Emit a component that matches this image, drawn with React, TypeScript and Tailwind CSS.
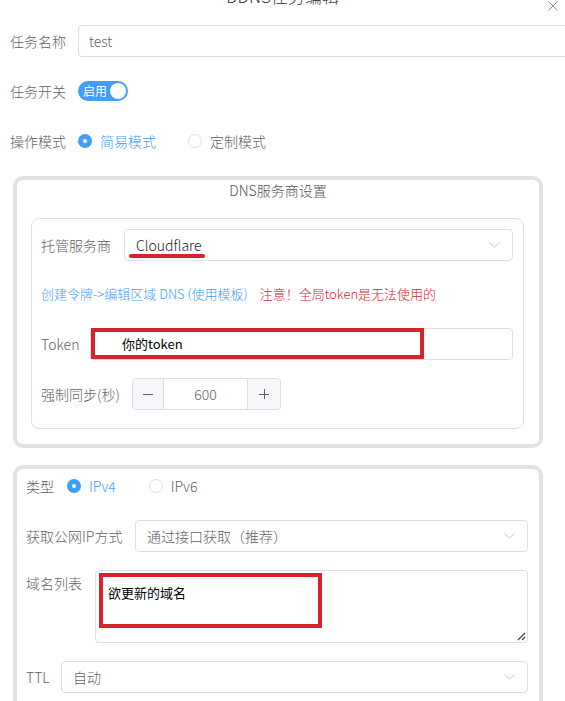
import React from 'react';

const Chevron = () => (
  <svg width="11" height="6" viewBox="0 0 11 6" className="shrink-0">
    <path d="M0.5 0.5 L5.5 5 L10.5 0.5" fill="none" stroke="#c0c4cc" strokeWidth="1" />
  </svg>
);

const Radio = ({ checked, label }: { checked?: boolean; label: string }) => (
  <span className="flex items-center">
    {checked ? (
      <span className="w-[14px] h-[14px] rounded-full bg-[#409eff] flex items-center justify-center">
        <span className="w-[4px] h-[4px] rounded-full bg-white" />
      </span>
    ) : (
      <span className="w-[14px] h-[14px] rounded-full border border-[#dcdfe6] bg-white" />
    )}
    <span className={`ml-[8px] text-[14px] ${checked ? 'text-[#409eff]' : 'text-[#606266]'}`}>{label}</span>
  </span>
);

export default function App() {
  return (
    <div className="relative w-[565px] h-[701px] overflow-hidden bg-white font-['Noto_Sans_CJK_SC','Noto_Sans',sans-serif] font-light text-[#606266]">
      {/* dialog header, scrolled up */}
      <div className="-mt-[15px] h-[22px] leading-[22px] text-center text-[17px] text-[#303133]">DDNS任务编辑</div>
      <svg width="10" height="10" viewBox="0 0 10 10" className="absolute top-[1px] right-[7px]">
        <path d="M0.5 0.5 L9.5 9.5 M9.5 0.5 L0.5 9.5" stroke="#909399" strokeWidth="1" />
      </svg>

      {/* basic rows */}
      <div className="mt-[18px] flex items-center h-[32px]">
        <span className="w-[78px] shrink-0 pl-[10px] text-[14px]">任务名称</span>
        <div className="w-[500px] shrink-0 h-[32px] border border-[#dcdfe6] rounded-[4px] flex items-center pl-[10px] text-[14px]">test</div>
      </div>

      <div className="mt-[18px] flex items-center h-[32px]">
        <span className="w-[78px] shrink-0 pl-[10px] text-[14px]">任务开关</span>
        <div className="w-[50px] h-[20px] rounded-full bg-[#409eff] flex items-center justify-between pl-[5px] pr-[2px]">
          <span className="text-[12px] leading-[12px] text-white font-normal">启用</span>
          <span className="w-[16px] h-[16px] rounded-full bg-white" />
        </div>
      </div>

      <div className="mt-[18px] flex items-center h-[32px]">
        <span className="w-[78px] shrink-0 pl-[10px] text-[14px]">操作模式</span>
        <Radio checked label="简易模式" />
        <span className="w-[32px]" />
        <Radio label="定制模式" />
      </div>

      {/* DNS provider box */}
      <div className="mt-[19px] ml-[13px] w-[530px] border-[4px] border-[#e2e2e2] rounded-[10px] pb-[15px]">
        <div className="h-[20px] leading-[20px] text-center text-[14px] text-[#555]">DNS服务商设置</div>
        <div className="mt-[18px] ml-[14px] w-[493px] border border-[#dfe1e6] rounded-[8px] pl-[9px] pr-[10px] pt-[10px] pb-[18px]">
          <div className="flex items-center h-[32px]">
            <span className="w-[83px] shrink-0 text-[14px]">托管服务商</span>
            <div className="relative flex-1 h-[32px] border border-[#dcdfe6] rounded-[4px] flex items-center justify-between pl-[11px] pr-[12px]">
              <span className="text-[14px] text-[#222]">Cloudflare</span>
              <Chevron />
              <span className="absolute left-[4px] top-[24px] w-[76px] h-[4px] rounded-full bg-[#d8232c]" />
            </div>
          </div>

          <div className="mt-[23px] h-[20px] leading-[20px] text-[13px] flex">
            <span className="text-[#409eff]">创建令牌-&gt;编辑区域 DNS (使用模板)</span>
            <span className="ml-[12px] text-[#d8232c]">注意！全局token是无法使用的</span>
          </div>

          <div className="mt-[24px] flex items-center h-[32px]">
            <span className="w-[49px] shrink-0 text-[14px]">Token</span>
            <div className="relative flex-1 h-[32px] border border-[#dcdfe6] rounded-[4px]">
              <div className="absolute left-0 -top-[1px] w-[333px] h-[31px] border-[4px] border-[#d8232c] flex items-center pl-[27px] text-[13px] text-black font-normal">
                你的token
              </div>
            </div>
          </div>

          <div className="mt-[18px] flex items-center h-[32px]">
            <span className="w-[91px] shrink-0 text-[14px]">强制同步(秒)</span>
            <div className="w-[149px] h-[32px] border border-[#dcdfe6] rounded-[4px] flex overflow-hidden">
              <div className="w-[31px] bg-[#f5f7fa] border-r border-[#dcdfe6] flex items-center justify-center">
                <span className="w-[10px] h-px bg-[#606266]" />
              </div>
              <div className="flex-1 flex items-center justify-center text-[14px]">600</div>
              <div className="w-[33px] bg-[#f5f7fa] border-l border-[#dcdfe6] flex items-center justify-center relative">
                <span className="w-[10px] h-px bg-[#606266]" />
                <span className="absolute w-px h-[10px] bg-[#606266]" />
              </div>
            </div>
          </div>
        </div>
      </div>

      {/* record box */}
      <div className="mt-[17px] ml-[13px] w-[530px] h-[300px] border-[4px] border-[#e2e2e2] rounded-[10px] pl-[9px] pr-[11px] pt-[7px]">
        <div className="flex items-center h-[20px]">
          <span className="w-[41px] shrink-0 text-[14px]">类型</span>
          <Radio checked label="IPv4" />
          <span className="w-[33px]" />
          <Radio label="IPv6" />
        </div>

        <div className="mt-[24px] flex items-center h-[32px]">
          <span className="w-[109px] shrink-0 text-[14px]">获取公网IP方式</span>
          <div className="flex-1 h-[32px] border border-[#dcdfe6] rounded-[4px] flex items-center justify-between pl-[11px] pr-[12px]">
            <span className="text-[14px]">通过接口获取（推荐）</span>
            <Chevron />
          </div>
        </div>

        <div className="mt-[18px] flex items-start">
          <span className="w-[69px] shrink-0 text-[14px] leading-[20px] pt-[3px]">域名列表</span>
          <div className="relative flex-1 h-[73px] border border-[#dcdfe6] rounded-[4px]">
            <div className="absolute left-[3px] top-[2px] w-[223px] h-[55px] border-[4px] border-[#d8232c] pl-[5px] pt-[6px] text-[13px] leading-[20px] text-black font-normal">
              欲更新的域名
            </div>
            <svg width="10" height="10" viewBox="0 0 10 10" className="absolute right-[1px] bottom-[1px]">
              <path d="M9 2 L2 9 M9 6 L6 9" stroke="#444" strokeWidth="1.2" />
            </svg>
          </div>
        </div>

        <div className="mt-[18px] flex items-center h-[32px]">
          <span className="w-[35px] shrink-0 text-[14px]">TTL</span>
          <div className="flex-1 h-[32px] border border-[#dcdfe6] rounded-[4px] flex items-center justify-between pl-[11px] pr-[12px]">
            <span className="text-[14px]">自动</span>
            <Chevron />
          </div>
        </div>
      </div>
    </div>
  );
}
